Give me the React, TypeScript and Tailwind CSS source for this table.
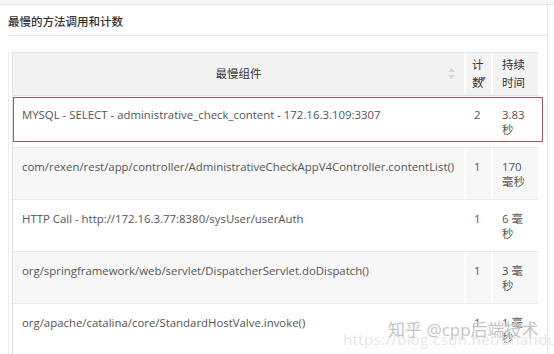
const FONT = "font-['Open_Sans','Noto_Sans_CJK_SC',sans-serif]"

type Row = {
  name: string
  count: string
  time: [string, string]
  striped: boolean
  highlighted?: boolean
}

const ROWS: Row[] = [
  {
    name: 'MYSQL - SELECT - administrative_check_content - 172.16.3.109:3307',
    count: '2',
    time: ['3.83', '秒'],
    striped: false,
    highlighted: true,
  },
  {
    name: 'com/rexen/rest/app/controller/AdministrativeCheckAppV4Controller.contentList()',
    count: '1',
    time: ['170', '毫秒'],
    striped: true,
  },
  {
    name: 'HTTP Call - http://172.16.3.77:8380/sysUser/userAuth',
    count: '1',
    time: ['6 毫', '秒'],
    striped: false,
  },
  {
    name: 'org/springframework/web/servlet/DispatcherServlet.doDispatch()',
    count: '1',
    time: ['3 毫', '秒'],
    striped: true,
  },
  {
    name: 'org/apache/catalina/core/StandardHostValve.invoke()',
    count: '1',
    time: ['1 毫', '秒'],
    striped: false,
  },
]

function SortIcon() {
  return (
    <svg width="7" height="11" viewBox="0 0 7 11" aria-hidden="true">
      <path d="M3.5 0 L7 4 L0 4 Z" fill="#d6d6d6" />
      <path d="M3.5 11 L7 7 L0 7 Z" fill="#d6d6d6" />
    </svg>
  )
}

function TableRow({ row }: { row: Row }) {
  const bg = row.striped ? 'bg-[#f7f7f7]' : 'bg-white'
  return (
    <div className="relative flex h-[52px] border-b border-[#ebebeb] text-[11.4px] leading-[15px] text-[#555]">
      <div className={`w-[453px] border-r-2 border-white pl-[9px] pt-[11px] ${bg}`}>
        {row.name}
      </div>
      <div className={`w-[27px] border-r-2 border-white pl-[8px] pt-[11px] ${bg}`}>
        {row.count}
      </div>
      <div className={`w-[45px] pl-[9px] pt-[11px] ${bg}`}>
        <div>{row.time[0]}</div>
        <div>{row.time[1]}</div>
      </div>
      {row.highlighted ? (
        <div className="pointer-events-none absolute left-0 top-px h-[45px] w-[530px] border-[1.5px] border-[#9c5b5f]" />
      ) : null}
    </div>
  )
}

export default function App() {
  return (
    <div className={`relative h-[354px] w-[554px] overflow-hidden bg-white ${FONT}`}>
      <div className="h-[5px] border-b border-[#e6e6e6] bg-[#f5f5f5]" />
      <div className="h-[349px] w-[548px] border-r border-[#e4e4e4]">
        <div className="ml-[8px] flex h-[31px] items-center border-b border-[#e8e8e8] pt-[3px] text-[11.5px] font-medium text-[#333]">
          最慢的方法调用和计数
        </div>

        <div className="ml-[8px] mt-[16px] border-l border-[#ececec] pl-[3px]">
          <div className="w-[526px] border-l border-t border-[#e2e2e2]">
            <div className="flex h-[43px] border-b border-[#e0e0e0] bg-[#f3f3f3] text-[11.5px] leading-[18px] text-[#333]">
              <div className="relative flex w-[453px] items-center justify-center border-r-2 border-white">
                最慢组件
                <span className="absolute right-[9px] top-[15px]">
                  <SortIcon />
                </span>
              </div>
              <div className="relative flex w-[27px] flex-col justify-center border-r-2 border-white pl-[6px]">
                <span>计</span>
                <span>数</span>
                <svg
                  className="absolute left-[14px] top-[24px]"
                  width="6"
                  height="5"
                  viewBox="0 0 6 5"
                  aria-hidden="true"
                >
                  <path d="M0 0 L6 0 L3 5 Z" fill="#6f6fc8" />
                </svg>
              </div>
              <div className="flex w-[45px] flex-col justify-center pl-[9px]">
                <span>持续</span>
                <span>时间</span>
              </div>
            </div>

            {ROWS.map((row) => (
              <TableRow key={row.name} row={row} />
            ))}
          </div>
        </div>
      </div>

      <div className="pointer-events-none absolute left-[343px] top-[328px] whitespace-nowrap text-[15px] tracking-wide text-[#e6e6e6]">
        https://blog.csdn.net/ananduo
      </div>
      <div className="pointer-events-none absolute left-[388px] top-[317px] text-[17px] text-[#c4c4c4] [text-shadow:0_0_2px_#fff]">
        知乎 @cpp后端技术
      </div>
    </div>
  )
}
